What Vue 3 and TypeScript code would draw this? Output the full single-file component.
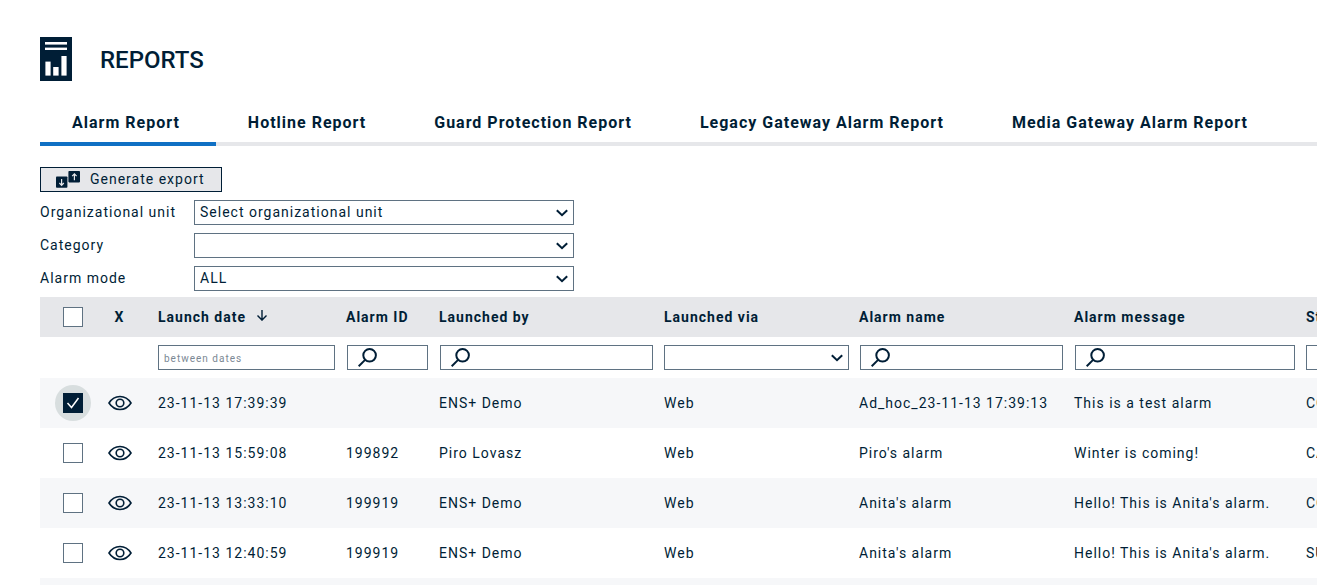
<script setup lang="ts">
import { ref } from 'vue'

interface AlarmRow {
  selected: boolean
  date: string
  id: string
  by: string
  via: string
  name: string
  message: string
  status: string
}

const tabs: string[] = [
  'Alarm Report',
  'Hotline Report',
  'Guard Protection Report',
  'Legacy Gateway Alarm Report',
  'Media Gateway Alarm Report',
]
const activeTab = ref(0)

const filters = [
  { id: 'unit', label: 'Organizational unit', value: 'Select organizational unit' },
  { id: 'category', label: 'Category', value: '' },
  { id: 'mode', label: 'Alarm mode', value: 'ALL' },
]

const rows = ref<AlarmRow[]>([
  { selected: true, date: '23-11-13 17:39:39', id: '', by: 'ENS+ Demo', via: 'Web', name: 'Ad_hoc_23-11-13 17:39:13', message: 'This is a test alarm', status: 'COMPLETED' },
  { selected: false, date: '23-11-13 15:59:08', id: '199892', by: 'Piro Lovasz', via: 'Web', name: "Piro's alarm", message: 'Winter is coming!', status: 'CANCELED' },
  { selected: false, date: '23-11-13 13:33:10', id: '199919', by: 'ENS+ Demo', via: 'Web', name: "Anita's alarm", message: "Hello! This is Anita's alarm.", status: 'COMPLETED' },
  { selected: false, date: '23-11-13 12:40:59', id: '199919', by: 'ENS+ Demo', via: 'Web', name: "Anita's alarm", message: "Hello! This is Anita's alarm.", status: 'SUCCESS' },
])
</script>

<template>
  <main class="page">
    <header class="head">
      <svg class="logo" width="32" height="44" viewBox="0 0 32 44" aria-hidden="true">
        <rect width="32" height="44" fill="#001e36" />
        <g fill="#fff">
          <rect x="5" y="5" width="22" height="2.6" />
          <rect x="5" y="10.6" width="22" height="2.4" />
          <rect x="5.4" y="24.6" width="5.2" height="14" />
          <rect x="13.2" y="30" width="5.4" height="8.6" />
          <rect x="21.4" y="19" width="5.2" height="19.6" />
        </g>
      </svg>
      <h1>REPORTS</h1>
    </header>

    <nav class="tabs">
      <button
        v-for="(tab, i) in tabs"
        :key="tab"
        type="button"
        class="tab"
        :class="{ active: i === activeTab }"
        @click="activeTab = i"
      >{{ tab }}</button>
    </nav>

    <button type="button" class="export">
      <svg width="24" height="17" viewBox="0 0 24 17" aria-hidden="true">
        <rect x="0" y="5.4" width="11.4" height="11.4" rx="0.8" fill="#001e36" />
        <rect x="12.4" y="0" width="11.6" height="11.4" rx="0.8" fill="#001e36" />
        <path d="M5.6 8v6.4M3.4 12l2.2 2.4L7.8 12M18.4 9.2V2.8M16.2 5.2l2.2-2.4 2.2 2.4" fill="none" stroke="#e6e7ea" stroke-width="1.2" />
      </svg>
      <span>Generate export</span>
    </button>

    <form class="filters">
      <template v-for="f in filters" :key="f.id">
        <label :for="f.id">{{ f.label }}</label>
        <div class="select">
          <select :id="f.id">
            <option>{{ f.value }}</option>
          </select>
          <svg class="chevron" width="12" height="8" viewBox="0 0 12 8" aria-hidden="true">
            <path d="M.8 1.2 6 6.2l5.2-5" />
          </svg>
        </div>
      </template>
    </form>

    <table class="grid">
      <colgroup>
        <col class="c-check" />
        <col class="c-view" />
        <col class="c-date" />
        <col class="c-id" />
        <col class="c-by" />
        <col class="c-via" />
        <col class="c-name" />
        <col class="c-message" />
        <col />
      </colgroup>
      <thead>
        <tr class="titles">
          <th class="center">
            <label class="tick"><input type="checkbox" aria-label="Select all" /></label>
          </th>
          <th class="center eye">X</th>
          <th>
            Launch date
            <svg class="sort" width="10" height="11" viewBox="0 0 10 11" aria-hidden="true">
              <path d="M5 0v10M.5 5.6 5 10.100 9.5 5.6" />
            </svg>
          </th>
          <th>Alarm ID</th>
          <th>Launched by</th>
          <th>Launched via</th>
          <th>Alarm name</th>
          <th>Alarm message</th>
          <th>Status</th>
        </tr>
        <tr class="search-row">
          <td></td>
          <td></td>
          <td><input class="field" type="text" placeholder="between dates" aria-label="Launch date" /></td>
          <td v-for="label in ['Alarm ID', 'Launched by']" :key="label" class="with-glass">
            <div class="search">
              <input class="field" type="text" :aria-label="label" />
              <svg class="glass" width="20" height="20" viewBox="0 0 20 20" aria-hidden="true">
                <circle cx="11.6" cy="7.3" r="6.3" />
                <path d="M7.100 11.900.7 18.300" />
              </svg>
            </div>
          </td>
          <td class="with-list">
            <div class="select">
              <select aria-label="Launched via"><option></option></select>
              <svg class="chevron" width="12" height="8" viewBox="0 0 12 8" aria-hidden="true">
                <path d="M.8 1.2 6 6.2l5.2-5" />
              </svg>
            </div>
          </td>
          <td v-for="label in ['Alarm name', 'Alarm message']" :key="label" class="with-glass">
            <div class="search">
              <input class="field" type="text" :aria-label="label" />
              <svg class="glass" width="20" height="20" viewBox="0 0 20 20" aria-hidden="true">
                <circle cx="11.6" cy="7.3" r="6.3" />
                <path d="M7.100 11.900.7 18.300" />
              </svg>
            </div>
          </td>
          <td><div class="select status"><select aria-label="Status"><option></option></select></div></td>
        </tr>
      </thead>
      <tbody>
        <tr v-for="(row, i) in rows" :key="i">
          <td class="center">
            <label class="tick" :class="{ on: row.selected }">
              <input v-model="row.selected" type="checkbox" :aria-label="row.date" />
              <svg v-if="row.selected" class="mark" width="20" height="20" viewBox="0 0 20 20" aria-hidden="true">
                <path d="M4.500 10 8.500 14.500 15.500 5" />
              </svg>
            </label>
          </td>
          <td class="center eye">
            <button type="button" class="view" :aria-label="row.date">
              <svg width="24" height="16" viewBox="0 0 24 16" aria-hidden="true">
                <path d="M1 8C6.500-.6 17.500-.6 23 8 17.500 16.600 6.500 16.600 1 8Z" />
                <circle cx="12" cy="8" r="3.800" />
              </svg>
            </button>
          </td>
          <td>{{ row.date }}</td>
          <td>{{ row.id }}</td>
          <td>{{ row.by }}</td>
          <td>{{ row.via }}</td>
          <td>{{ row.name }}</td>
          <td>{{ row.message }}</td>
          <td>{{ row.status }}</td>
        </tr>
        <tr><td colspan="9"></td></tr>
      </tbody>
    </table>
  </main>
</template>

<style>
body {
  margin: 0;
  background: #fff;
}
</style>

<style scoped>
.page {
  box-sizing: border-box;
  height: 100vh;
  overflow: hidden;
  padding: 37px 0 0 40px;
  color: #001e36;
  font: 14px/20px Roboto, "Liberation Sans", sans-serif;
  letter-spacing: 1px;
}

button,
input,
select {
  box-sizing: border-box;
  margin: 0;
  font: inherit;
  letter-spacing: inherit;
  color: inherit;
}

.head {
  display: flex;
  align-items: center;
  gap: 28px;
}

.head h1 {
  margin: 0;
  padding-top: 2px;
  font-size: 24px;
  line-height: 32px;
  font-weight: 500;
  letter-spacing: normal;
}

.tabs {
  display: flex;
  margin-top: 21px;
  box-shadow: inset 0 -4px #e6e7ea;
}

.tab {
  flex: none;
  height: 44px;
  padding: 2px 36px 0 32px;
  border: 0;
  border-bottom: 4px solid transparent;
  background: none;
  font-size: 16px;
  font-weight: 700;
  white-space: nowrap;
}

.tab.active {
  border-bottom-color: #1070c4;
}

.export {
  display: flex;
  align-items: center;
  gap: 10px;
  height: 25px;
  margin-top: 21px;
  padding: 0 16px 0 15px;
  border: 1px solid #001e36;
  background: #e6e7ea;
}

.export span,
.filters label {
  padding-bottom: 2px;
}

.filters {
  display: grid;
  grid-template-columns: 154px minmax(0, 380px);
  row-gap: 8px;
  align-items: center;
  margin: 8px 0 6px;
}

.select,
.search {
  position: relative;
  height: 25px;
}

select,
.field {
  display: block;
  width: 100%;
  height: 25px;
  padding: 0 5px 2px;
  border: 1px solid #5f7282;
  border-radius: 0;
  background: #fff;
  appearance: none;
  outline: 0;
}

.field::placeholder {
  color: #7b8894;
  opacity: 1;
  font-size: 10px;
}

.search .field {
  padding-left: 36px;
}

.status {
  width: 120px;
}

svg {
  display: block;
  flex: none;
}

.chevron,
.glass,
.mark {
  position: absolute;
  fill: none;
  stroke: #001e36;
  stroke-width: 2;
  pointer-events: none;
}

.chevron {
  top: 9px;
  right: 6px;
}

.glass {
  top: 3px;
  left: 11px;
}

.grid {
  width: 100%;
  table-layout: fixed;
  border-collapse: collapse;
}

.c-check { width: 66px; }
.c-view { width: 45px; }
.c-date { width: 188px; }
.c-id { width: 93px; }
.c-by { width: 225px; }
.c-via { width: 195px; }
.c-name { width: 215px; }
.c-message { width: 232px; }

th,
td {
  height: 50px;
  padding: 0 0 0 7px;
  text-align: left;
  white-space: nowrap;
}

.titles th {
  height: 40px;
  background: #e6e7ea;
}

.search-row td {
  height: 41px;
  padding: 0 4px 0 7px;
}

.search-row .with-glass {
  padding-left: 8px;
}

.search-row .with-list {
  padding-right: 3px;
}

tbody tr:nth-child(odd) {
  background: #f6f7f9;
}

th.center,
td.center {
  padding: 0;
  text-align: center;
}

th.eye,
td.eye {
  padding-right: 18px;
}

.sort {
  display: inline-block;
  margin-left: 6px;
  vertical-align: 1px;
  fill: none;
  stroke: #001e36;
  stroke-width: 1.4;
}

.tick {
  position: relative;
  display: flex;
  align-items: center;
  justify-content: center;
  width: 36px;
  height: 36px;
  margin: 0 auto;
  border-radius: 50%;
}

.tick.on {
  background: #d8dedf;
}

.tick input {
  width: 20px;
  height: 20px;
  border: 1px solid #5f7282;
  background: #fff;
  appearance: none;
}

.tick input:checked {
  border-color: #001e36;
  background: #001e36;
}

.mark {
  stroke: #fff;
  stroke-width: 1.5;
}

.view {
  display: block;
  margin: 0 auto;
  padding: 0;
  border: 0;
  background: none;
  fill: none;
  stroke: #001e36;
  stroke-width: 1.6;
}
</style>
